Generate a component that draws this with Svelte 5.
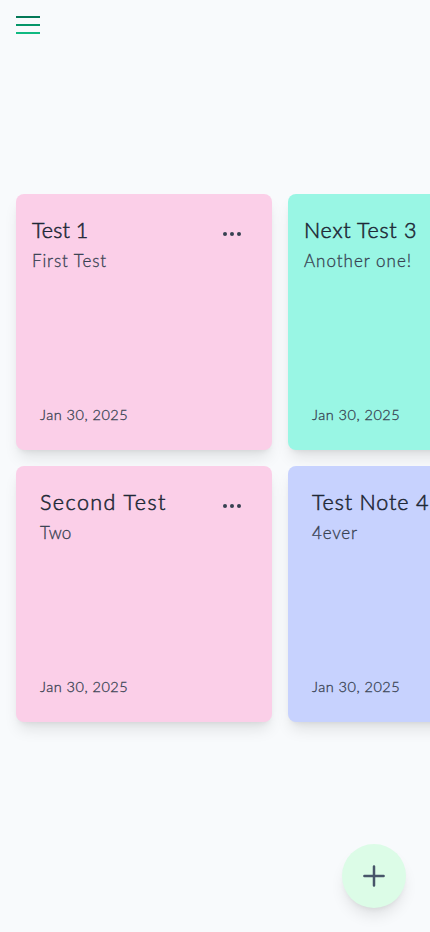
<script>
  const notes = [
    { title: 'Test 1', body: 'First Test', color: '#fbcfe8', editing: false, ts: 0.1, bs: 0.9 },
    { title: 'Next Test 3', body: 'Another one!', color: '#99f6e4', editing: false, ts: 0.7, bs: 1 },
    { title: 'Second Test', body: 'Two', color: '#fbcfe8', editing: true, ts: 1.45, bs: 0.3 },
    { title: 'Test Note 4', body: '4ever', color: '#c7d2fe', editing: true, ts: 0.85, bs: 0.8 }
  ];
</script>

<div class="page">
  <header>
    <button class="menu" aria-label="Menu"><i></i><i></i><i></i></button>
  </header>
  <main>
    {#each notes as note}
      <article class:inset={note.editing} style:background={note.color}>
        <div class="top">
          <h2 style:letter-spacing="{note.ts}px">{note.title}</h2>
          <svg class="dots" width="20" height="20" viewBox="0 0 20 20" fill="#374151">
            <circle cx="3" cy="10" r="2" /><circle cx="10" cy="10" r="2" /><circle cx="17" cy="10" r="2" />
          </svg>
        </div>
        <p style:letter-spacing="{note.bs}px">{note.body}</p>
        <time>Jan 30, 2025</time>
      </article>
    {/each}
  </main>
  <button class="add" aria-label="Add note">
    <svg width="32" height="32" viewBox="0 0 32 32" fill="none" stroke="#475569" stroke-width="2.5" stroke-linecap="round">
      <path d="M16 6.4v19.2M6.4 16h19.2" />
    </svg>
  </button>
</div>

<style>
  :global(body) { margin: 0; background: #f8fafc; }
  .page {
    height: 932px;
    overflow: hidden;
    background: #f8fafc;
    font-family: Lato, "Open Sans", sans-serif;
    font-weight: 300;
    display: flex;
    flex-direction: column;
  }
  header { height: 178px; padding: 16px 16px 0; box-sizing: border-box; }
  button { border: 0; padding: 0; }
  .menu { background: none; display: flex; flex-direction: column; gap: 6px; width: 24px; }
  .menu i { display: block; width: 24px; height: 2px; background: #047857; }
  .menu i:nth-child(2) { background: #059669; }
  .menu i:nth-child(3) { background: #10b981; }
  main {
    display: grid;
    grid-template-columns: 256px 256px;
    grid-auto-rows: 256px;
    gap: 16px;
    padding: 16px;
  }
  article {
    box-sizing: border-box;
    border-radius: 8px;
    padding: 22px 16px 25px;
    display: flex;
    flex-direction: column;
    box-shadow: 0 10px 15px -3px rgb(0 0 0 / 0.1), 0 4px 6px -4px rgb(0 0 0 / 0.1);
    white-space: nowrap;
  }
  .inset { padding-left: 24px; }
  .top { display: flex; justify-content: space-between; height: 28px; }
  h2 {
    margin: 0;
    font-size: 21.5px;
    line-height: 28px;
    font-weight: 300;
    color: #1f2937;
    -webkit-text-stroke: 0.55px #1f2937;
  }
  .dots { margin: 8px 14px 0 0; }
  p {
    margin: 5px 0 0;
    font-size: 17px;
    line-height: 24px;
    color: #374151;
    -webkit-text-stroke: 0.3px #374151;
  }
  time {
    margin-top: auto;
    font-size: 14.5px;
    line-height: 20px;
    letter-spacing: 0.5px;
    color: #374151;
    -webkit-text-stroke: 0.3px #374151;
  }
  article:not(.inset) time { padding-left: 8px; }
  .add {
    position: absolute;
    left: 342px;
    top: 844px;
    width: 64px;
    height: 64px;
    border-radius: 50%;
    background: #dcfce7;
    display: flex;
    align-items: center;
    justify-content: center;
    box-shadow: 0 10px 15px -3px rgb(0 0 0 / 0.1), 0 4px 6px -4px rgb(0 0 0 / 0.1);
  }
</style>
